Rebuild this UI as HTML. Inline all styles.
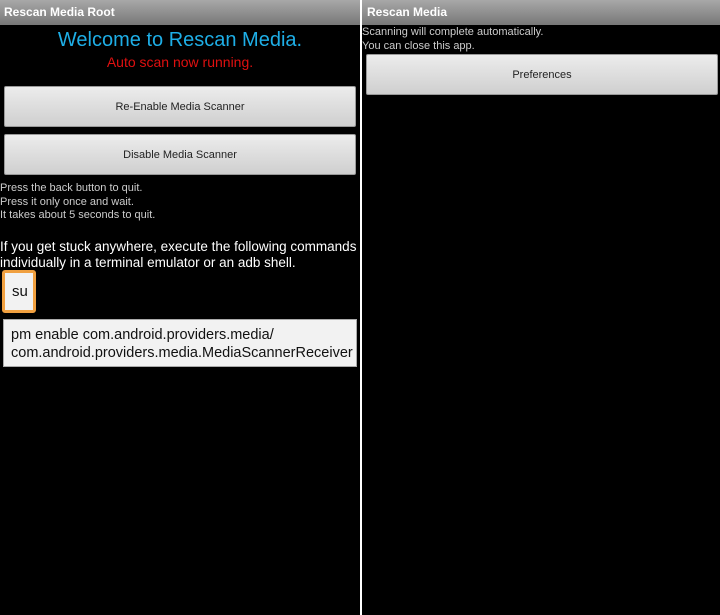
<!DOCTYPE html>
<html><head><style>
*{margin:0;padding:0;box-sizing:border-box}
body{width:720px;height:615px;background:#000;position:relative;overflow:hidden;font-family:"Liberation Sans",sans-serif}
.bar{position:absolute;top:0;height:25px;background:linear-gradient(#a8a8a8,#777);color:#fff;font-size:12px;font-weight:bold;line-height:25px;padding-left:4px}
.btn{position:absolute;background:linear-gradient(#ececec,#cfcfcf);border:1px solid #999;border-radius:2px;color:#222;font-size:11px;text-align:center}
.t{position:absolute;color:#ccc;font-size:11px;line-height:13.5px}
</style></head><body>
<div class="bar" style="left:0;width:360px">Rescan Media Root</div>
<div style="position:absolute;left:360px;top:0;width:2px;height:615px;background:#fff"></div>
<div class="bar" style="left:362px;width:358px;padding-left:5px">Rescan Media</div>

<div style="position:absolute;left:0;width:360px;top:29px;text-align:center;color:#1eaee6;font-size:20px">Welcome to Rescan Media.</div>
<div style="position:absolute;left:0;width:360px;top:54px;text-align:center;color:#e01010;font-size:14px">Auto scan now running.</div>
<div class="btn" style="left:4px;top:86px;width:352px;height:41px;line-height:40px">Re-Enable Media Scanner</div>
<div class="btn" style="left:4px;top:134px;width:352px;height:41px;line-height:40px">Disable Media Scanner</div>
<div class="t" style="left:0;top:182px">Press the back button to quit.<br>Press it only once and wait.<br>It takes about 5 seconds to quit.</div>
<div style="position:absolute;left:0;top:239px;color:#fff;font-size:13.5px;line-height:16px">If you get stuck anywhere, execute the following commands<br>individually in a terminal emulator or an adb shell.</div>
<div style="position:absolute;left:2px;top:270px;width:34px;height:43px;background:#f2f2f2;border:3px solid #f0a040;border-radius:3px;color:#111;font-size:15px;line-height:37px;padding-left:7px">su</div>
<div style="position:absolute;left:3px;top:319px;width:354px;height:48px;background:#f2f2f2;border:1px solid #aaa;color:#111;font-size:14.5px;line-height:18px;padding:6px 0 0 7px">pm enable com.android.providers.media/<br>com.android.providers.media.MediaScannerReceiver</div>

<div class="t" style="left:362px;top:26px">Scanning will complete automatically.<br>You can close this app.</div>
<div class="btn" style="left:366px;top:54px;width:352px;height:41px;line-height:40px">Preferences</div>
</body></html>
